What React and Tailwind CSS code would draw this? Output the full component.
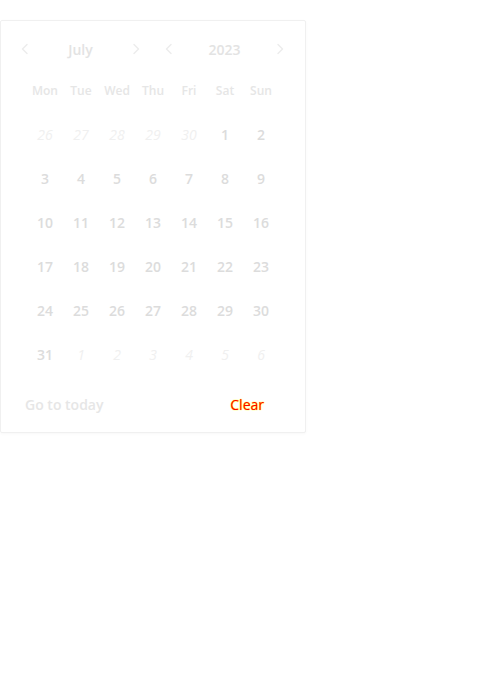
import React from 'react';

const dayNames = ['Mon', 'Tue', 'Wed', 'Thu', 'Fri', 'Sat', 'Sun'];

const weeks = [
  [[26, 0], [27, 0], [28, 0], [29, 0], [30, 0], [1, 1], [2, 1]],
  [[3, 1], [4, 1], [5, 1], [6, 1], [7, 1], [8, 1], [9, 1]],
  [[10, 1], [11, 1], [12, 1], [13, 1], [14, 1], [15, 1], [16, 1]],
  [[17, 1], [18, 1], [19, 1], [20, 1], [21, 1], [22, 1], [23, 1]],
  [[24, 1], [25, 1], [26, 1], [27, 1], [28, 1], [29, 1], [30, 1]],
  [[31, 1], [1, 0], [2, 0], [3, 0], [4, 0], [5, 0], [6, 0]],
];

function Chevron({ dir }) {
  return (
    <svg width="12" height="12" viewBox="0 0 12 12" className="text-[#ececec]">
      <polyline
        points={dir === 'left' ? '8,1.5 3.5,6 8,10.5' : '4,1.5 8.5,6 4,10.5'}
        fill="none"
        stroke="currentColor"
        strokeWidth="1.4"
        strokeLinecap="round"
        strokeLinejoin="round"
      />
    </svg>
  );
}

function Picker({ label }) {
  return (
    <div className="flex w-[123px] items-center justify-between">
      <Chevron dir="left" />
      <span className="text-[14px] font-semibold text-[#e3e3e3]">{label}</span>
      <Chevron dir="right" />
    </div>
  );
}

export default function App() {
  return (
    <div className="min-h-[700px] bg-white pt-5 font-['Open_Sans',sans-serif]">
      <div className="w-[306px] rounded-[2px] border border-[#f0f0f0] bg-white shadow-[0_1px_3px_rgba(0,0,0,0.03)]">
        <div className="flex h-[56px] items-center gap-[21px] pl-[18px]">
          <Picker label="July" />
          <Picker label="2023" />
        </div>
        <div className="grid h-[28px] grid-cols-7 items-center px-[26px]">
          {dayNames.map((d) => (
            <div key={d} className="text-center text-[12px] font-semibold text-[#e6e6e6]">
              {d}
            </div>
          ))}
        </div>
        <div className="mt-[7px] px-[26px]">
          {weeks.map((week, i) => (
            <div key={i} className="grid h-[44px] grid-cols-7 items-center">
              {week.map(([n, cur], j) => (
                <div
                  key={j}
                  className={
                    cur
                      ? 'text-center text-[14px] font-semibold text-[#dcdcdc]'
                      : 'text-center text-[14px] italic text-[#f0f0f0]'
                  }
                >
                  {n}
                </div>
              ))}
            </div>
          ))}
        </div>
        <div className="flex h-[56px] items-center justify-between pl-[24px] pr-[41px]">
          <button className="text-[14px] font-semibold text-[#e6e6e6]">Go to today</button>
          <button className="text-[14px] text-[#ff0000] [text-shadow:0_0_1px_#ffff00,0_0_1px_#ffff00]">Clear</button>
        </div>
      </div>
    </div>
  );
}
